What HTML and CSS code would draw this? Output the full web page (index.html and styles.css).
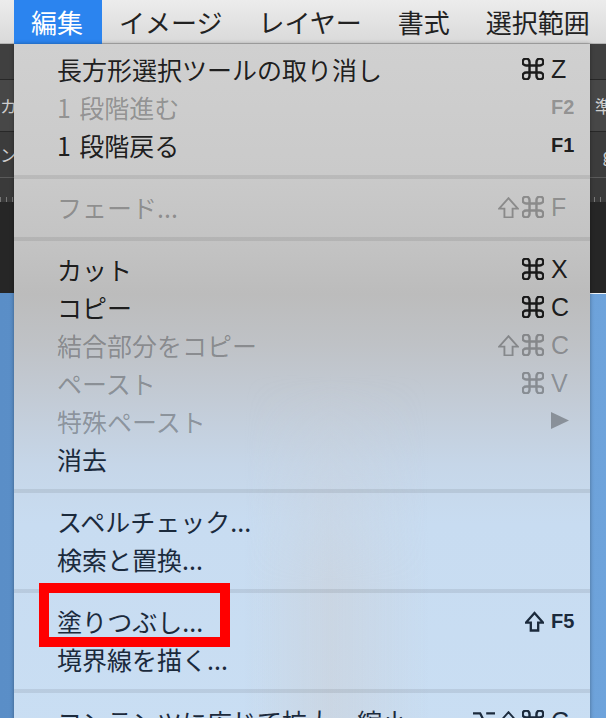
FILE: index.html
```html
<!DOCTYPE html>
<html lang="ja">
<head>
  <meta charset="UTF-8">
  <meta name="viewport" content="width=device-width, initial-scale=1.0">
  <title>編集メニュー</title>
  <link rel="stylesheet" href="styles.css">
</head>
<body>
  <svg class="defs" width="0" height="0" aria-hidden="true">
    <symbol id="cmd" viewBox="2.5 2.5 19 19"><path d="M15 6v12a3 3 0 1 0 3-3H6a3 3 0 1 0 3 3V6a3 3 0 1 0-3 3h12a3 3 0 1 0-3-3" fill="none" stroke="currentColor"/></symbol>
    <symbol id="shift" viewBox="3 3 18 18"><path d="M8.5 20.5v-7.5H4L12 4l8 9h-4.5v7.5z" fill="none" stroke="currentColor" stroke-linejoin="miter"/></symbol>
    <symbol id="opt" viewBox="2 3 20 18"><path d="M2 5h6.5l7 14H22M14 5h8" fill="none" stroke="currentColor"/></symbol>
  </svg>

  <div class="screen">
    <header class="menubar">
      <span class="menubar-item is-open">編集</span>
      <span class="menubar-item">イメージ</span>
      <span class="menubar-item">レイヤー</span>
      <span class="menubar-item">書式</span>
      <span class="menubar-item">選択範囲</span>
    </header>

    <div class="panels">
      <div class="panel-row row-top"></div>
      <div class="panel-row row-mid"><span class="frag">カ</span><span class="frag frag-right">準</span></div>
      <div class="panel-row row-low"><span class="frag">ン-</span><span class="frag frag-right">g</span></div>
      <div class="panel-row ruler"></div>
      <div class="panel-dark"></div>
    </div>
    <div class="canvas"></div>

    <div class="dropdown">
      <ul class="menu-list">
        <li class="menu-item">長方形選択ツールの取り消し<span class="keys"><span class="mods"><svg class="i-cmd"><use href="#cmd"/></svg></span><span class="key">Z</span></span></li>
        <li class="menu-item is-disabled">1&#8196;段階進む<span class="keys"><span class="key fn">F2</span></span></li>
        <li class="menu-item">1&#8196;段階戻る<span class="keys"><span class="key fn">F1</span></span></li>
        <li class="menu-sep"></li>
        <li class="menu-item is-disabled">フェード...<span class="keys"><span class="mods"><svg class="i-shift"><use href="#shift"/></svg><svg class="i-cmd"><use href="#cmd"/></svg></span><span class="key">F</span></span></li>
        <li class="menu-sep"></li>
        <li class="menu-item">カット<span class="keys"><span class="mods"><svg class="i-cmd"><use href="#cmd"/></svg></span><span class="key">X</span></span></li>
        <li class="menu-item">コピー<span class="keys"><span class="mods"><svg class="i-cmd"><use href="#cmd"/></svg></span><span class="key">C</span></span></li>
        <li class="menu-item is-disabled">結合部分をコピー<span class="keys"><span class="mods"><svg class="i-shift"><use href="#shift"/></svg><svg class="i-cmd"><use href="#cmd"/></svg></span><span class="key">C</span></span></li>
        <li class="menu-item is-disabled">ペースト<span class="keys"><span class="mods"><svg class="i-cmd"><use href="#cmd"/></svg></span><span class="key">V</span></span></li>
        <li class="menu-item is-disabled">特殊ペースト<span class="keys"><span class="key submenu"><svg viewBox="0 0 18 18"><polygon points="0,0 18,8.5 0,17" fill="currentColor"/></svg></span></span></li>
        <li class="menu-item is-tinted">消去</li>
        <li class="menu-sep"></li>
        <li class="menu-item is-tinted">スペルチェック...</li>
        <li class="menu-item is-tinted">検索と置換...</li>
        <li class="menu-sep"></li>
        <li class="menu-item is-tinted">塗りつぶし...<span class="keys"><span class="mods"><svg class="i-shift is-bold"><use href="#shift"/></svg></span><span class="key fn">F5</span></span></li>
        <li class="menu-item is-tinted">境界線を描く...</li>
        <li class="menu-sep"></li>
        <li class="menu-item is-tinted">コンテンツに応じて拡大・縮小<span class="keys"><span class="mods"><svg class="i-opt"><use href="#opt"/></svg><svg class="i-shift"><use href="#shift"/></svg><svg class="i-cmd"><use href="#cmd"/></svg></span><span class="key">C</span></span></li>
      </ul>
    </div>

    <div class="mark-box"></div>
  </div>
</body>
</html>
```

FILE: styles.css
```css
body {
  margin: 0;
  font-family: "Noto Sans CJK JP", "Liberation Sans", sans-serif;
  background: #2a2a2a;
}
.defs { position: absolute; }
.screen {
  position: relative;
  width: 606px;
  height: 718px;
  overflow: hidden;
  display: flex;
  flex-direction: column;
}

/* menu bar */
.menubar {
  flex: none;
  height: 44px;
  display: flex;
  padding-left: 14px;
  background: linear-gradient(#ececec, #d9d9d9);
  box-shadow: inset 0 -1px #b4b4b4;
  font-size: 26px;
  color: #222;
  white-space: nowrap;
}
.menubar-item {
  flex: none;
  display: flex;
  align-items: center;
  padding: 0 19px 2px 17px;
}
.menubar-item.is-open {
  background: #2b84ef;
  color: #fff;
}

/* app panels behind the menu */
.panels {
  flex: none;
  display: flex;
  flex-direction: column;
}
.panel-row {
  display: flex;
  justify-content: space-between;
  align-items: center;
  font-size: 17px;
  color: #cfcfcf;
  border-bottom: 1px solid #282828;
}
.row-top { height: 35px; background: #404040; }
.row-mid { height: 51px; background: #474747; }
.row-low { height: 45px; background: #3c3c3c; border-bottom-color: #5a5a5a; }
.ruler {
  height: 24px;
  border: none;
  background:
    repeating-linear-gradient(90deg, #777 0 1px, transparent 1px 6px) bottom / 100% 5px no-repeat,
    #3a3a3a;
}
.frag-right { margin-right: -6px; }
.panel-dark {
  height: 91px;
  background: #262626;
}
.canvas {
  flex: 1;
  background:
    linear-gradient(#eef3f8, #eef3f8) right top / 16px 1px no-repeat,
    linear-gradient(90deg, #5a8ec7, #6ea3db);
}

/* dropdown */
.dropdown {
  position: absolute;
  left: 14px;
  top: 44px;
  width: 576px;
  height: 700px;
  background: linear-gradient(#d0d0d0 0, #cacaca 130px, #c3c3c3 200px, #bcbcbc 250px, #bfc2c6 300px, #c3ccd7 360px, #c6d6e8 420px, #c8dcf1 480px, #c9def3 700px);
  box-shadow: 0 0 4px rgba(0, 0, 0, 0.35);
}
.dropdown::before {
  content: "";
  position: absolute;
  inset: 0;
  background: linear-gradient(90deg, transparent 40%, rgba(204, 207, 213, 0.5) 55%, transparent 72%);
  -webkit-mask-image: linear-gradient(transparent 330px, #000 540px);
  mask-image: linear-gradient(transparent 330px, #000 540px);
}
.menu-list {
  position: relative;
  list-style: none;
  margin: 0;
  padding: 7px 0 0;
}
.menu-item {
  display: flex;
  justify-content: space-between;
  align-items: center;
  height: 38px;
  padding: 0 14px 2px 43px;
  box-sizing: border-box;
  font-size: 25px;
  color: rgba(0, 0, 0, 0.87);
  white-space: pre;
}
.menu-item.is-disabled { color: rgba(0, 0, 0, 0.3); }
.menu-item.is-tinted { color: #1b2a3c; }
.menu-sep {
  height: 4px;
  margin: 10px 0;
  background: rgba(0, 0, 0, 0.08);
}
.keys {
  display: flex;
  align-items: center;
}
.mods {
  display: flex;
  align-items: center;
  gap: 3px;
}
.mods svg {
  width: 22px;
  height: 22px;
  stroke-width: 2.1;
}
.mods .i-shift {
  width: 21px;
  height: 21px;
  stroke-width: 1.6;
}
.mods .i-shift.is-bold {
  width: 19px;
  height: 21px;
  stroke-width: 2.2;
}
.key {
  width: 25px;
  margin-left: 7px;
  font-family: "Liberation Sans", sans-serif;
  font-size: 25px;
  line-height: 1;
}
.key.fn {
  font-size: 20px;
  font-weight: bold;
}
.key.submenu {
  display: flex;
  margin-left: 2px;
}
.key.submenu svg {
  width: 18px;
  height: 18px;
}

/* annotation */
.mark-box {
  position: absolute;
  left: 39px;
  top: 583px;
  width: 191px;
  height: 64px;
  box-sizing: border-box;
  border: 10px solid #ff0000;
}
```
